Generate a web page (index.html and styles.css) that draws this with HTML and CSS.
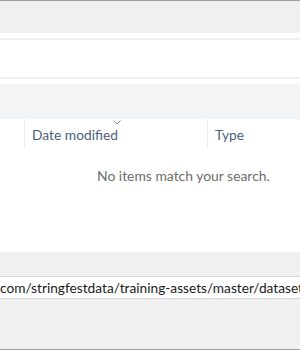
FILE: index.html
```
<!DOCTYPE html>
<html>
<head>
<meta charset="utf-8">
<link rel="stylesheet" href="styles.css">
</head>
<body>
<div class="window">
  <div class="topbar"></div>
  <div class="gap1"></div>
  <div class="searchbox"></div>
  <div class="gap2"></div>
  <div class="toolbar"></div>
  <div class="header">
    <div class="col col-name"></div>
    <div class="col col-date">Date modified<span class="chev"><svg width="8" height="5" viewBox="0 0 8 5"><path d="M0.5 0.5 L4 4 L7.5 0.5" fill="none" stroke="#8a8a8a" stroke-width="1"/></svg></span></div>
    <div class="col col-type">Type</div>
  </div>
  <div class="empty">No items match your search.</div>
  <div class="spacer"></div>
  <div class="bottom">
    <div class="addr">com/stringfestdata/training-assets/master/datasets/</div>
  </div>
</div>
</body>
</html>
```
FILE: styles.css
```
html, body {
  margin: 0;
  padding: 0;
  background: #ffffff;
}
.window {
  width: 300px;
  height: 350px;
  overflow: hidden;
  display: flex;
  flex-direction: column;
  font-family: "Lato", "Open Sans", sans-serif;
  border-top: 1px solid #a0a0a0;
  border-bottom: 1px solid #a0a0a0;
  box-sizing: border-box;
}
.topbar {
  height: 32px;
  background: #f0f0f0;
  flex: none;
}
.gap1 {
  height: 5px;
  background: #fff;
  flex: none;
}
.searchbox {
  height: 37px;
  border-top: 2px solid #f0f0f0;
  border-bottom: 2px solid #f0f0f0;
  background: #fff;
  flex: none;
}
.gap2 {
  height: 5px;
  flex: none;
}
.toolbar {
  height: 35px;
  background: #f3f4f6;
  flex: none;
}
.header {
  display: flex;
  height: 30px;
  flex: none;
}
.col {
  display: flex;
  align-items: center;
  font-size: 13.8px;
  color: #4c607a;
  position: relative;
}
.col-name {
  width: 24px;
  border-right: 1px solid #ececec;
}
.col-date {
  width: 175px;
  padding-left: 7px;
  border-right: 1px solid #ececec;
}
.col-type {
  padding-left: 7px;
}
.chev {
  position: absolute;
  left: 88px;
  top: 1px;
  line-height: 0;
}
.empty {
  text-align: left;
  padding-left: 97px;
  margin-top: 18px;
  font-size: 13.9px;
  color: #6d6d6d;
  flex: none;
}
.spacer {
  flex: 1;
}
.bottom {
  height: 97px;
  background: #f0f0f0;
  flex: none;
  padding-top: 24px;
  box-sizing: border-box;
}
.addr {
  height: 23px;
  box-sizing: border-box;
  background: #fff;
  border-top: 1px solid #d5d5d5;
  border-bottom: 1px solid #d5d5d5;
  font-size: 13.7px;
  line-height: 21px;
  color: #1a1a1a;
  white-space: nowrap;
  overflow: hidden;
  padding-left: 0;
}
```
